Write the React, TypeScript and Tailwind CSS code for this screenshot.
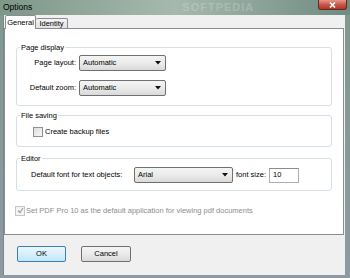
import React from 'react';

const font = { fontFamily: '"Liberation Sans", Arial, sans-serif' };

const Select: React.FC<{ value: string; className?: string }> = ({ value, className = '' }) => (
  <div
    className={`flex items-center justify-between rounded-[2px] border border-[#707070] bg-gradient-to-b from-[#f4f4f4] via-[#ebebeb] to-[#d9d9d9] pl-[3px] pr-[4px] text-[7.5px] text-black ${className}`}
  >
    <span>{value}</span>
    <svg width="6" height="4" viewBox="0 0 6 4">
      <path d="M0 0 H6 L3 3.5 Z" fill="#111" />
    </svg>
  </div>
);

const GroupBox: React.FC<{ title: string; className?: string; children: React.ReactNode }> = ({ title, className = '', children }) => (
  <div className={`relative mx-[11px] rounded-[3px] border border-[#d5dfe5] ${className}`}>
    <span className="absolute -top-[5px] left-[3px] bg-white px-[1px] text-[7.5px] leading-[9px] text-black">{title}</span>
    {children}
  </div>
);

export default function App() {
  return (
    <div style={font} className="flex h-[278px] w-[350px] flex-col bg-gradient-to-b from-[#7f9a8e] to-[#8d9aa2]">
      {/* title bar */}
      <div className="relative flex h-[15px] shrink-0 items-center bg-gradient-to-r from-[#7d9789] via-[#a7b9ae] to-[#6f8b82] pl-[3px]">
        <span className="text-[8.5px] text-black">Options</span>
        <span className="ml-[150px] text-[11px] font-bold tracking-[1px] text-white/20">SOFTPEDIA</span>
        <div className="absolute right-[3px] top-0 flex h-[10px] w-[29px] items-center justify-center rounded-b-[3px] border border-t-0 border-[#6a2a22] bg-gradient-to-b from-[#e3978a] via-[#c9574a] to-[#b13524]">
          <svg width="7" height="6" viewBox="0 0 7 6">
            <path d="M1 0.5 L6 5.5 M6 0.5 L1 5.5" stroke="#fff" strokeWidth="1.6" />
          </svg>
        </div>
      </div>

      {/* client area */}
      <div className="mb-[3px] ml-[3px] mr-[5px] flex flex-1 flex-col border-l border-[#7a8790] bg-[#f0f0f0]">
        {/* tabs */}
        <div className="relative z-10 flex h-[13px] items-end pl-[1px] pt-[2px] text-[7.5px]">
          <div className="-mb-[1px] flex h-[14px] w-[31px] items-start justify-center rounded-t-[2px] border border-b-0 border-[#898c95] bg-white pt-[1px]">
            General
          </div>
          <div className="flex h-[10px] w-[32px] items-center justify-center rounded-t-[2px] border border-b-0 border-l-0 border-[#898c95] bg-gradient-to-b from-[#f4f4f4] to-[#e1e1e1]">
            Identity
          </div>
        </div>

        {/* panel */}
        <div className="mr-[1px] flex h-[207px] flex-col border border-[#898c95] bg-white">
          <GroupBox title="Page display" className="mt-[18px] h-[59px]">
            <div className="flex flex-col gap-[9px] pt-[7px] text-[7.5px]">
              <div className="flex items-center">
                <span className="w-[61px] pr-[2px] text-right">Page layout:</span>
                <Select value="Automatic" className="ml-[1px] h-[16px] w-[87px]" />
              </div>
              <div className="flex items-center">
                <span className="w-[61px] pr-[2px] text-right">Default zoom:</span>
                <Select value="Automatic" className="ml-[1px] h-[16px] w-[87px]" />
              </div>
            </div>
          </GroupBox>

          <GroupBox title="File saving" className="mt-[9px] h-[32px]">
            <div className="flex h-full items-center pl-[16px] pt-[1px] text-[7.5px]">
              <div className="h-[10px] w-[10px] border border-[#8e8f8f] bg-gradient-to-br from-[#dcdcdc] to-[#f8f8f8]" />
              <span className="ml-[2px]">Create backup files</span>
            </div>
          </GroupBox>

          <GroupBox title="Editor" className="mt-[11px] h-[33px]">
            <div className="flex h-full items-center pl-[14px] pt-[1px] text-[7.5px]">
              <span className="w-[103px]">Default font for text objects:</span>
              <Select value="Arial" className="h-[16px] w-[99px]" />
              <span className="ml-[3px]">font size:</span>
              <div className="ml-[3px] flex h-[15px] w-[30px] items-center border border-[#abadb3] border-t-[#8a8d95] bg-white pl-[3px]">
                10
              </div>
            </div>
          </GroupBox>

          <div className="ml-[10px] mt-[14px] flex items-center text-[7.5px] text-[#8d8d8d]">
            <div className="flex h-[10px] w-[10px] items-center justify-center border border-[#c5c5c5] bg-[#f4f4f4]">
              <svg width="7" height="7" viewBox="0 0 7 7">
                <path d="M1 3.5 L3 5.5 L6 1" stroke="#a0a0a0" strokeWidth="1.2" fill="none" />
              </svg>
            </div>
            <span className="ml-[1px]">Set PDF Pro 10 as the default application for viewing pdf documents</span>
          </div>
        </div>

        {/* buttons */}
        <div className="ml-[13px] mt-[11px] flex gap-[15px] text-[7.5px]">
          <button className="flex h-[16px] w-[49px] items-center justify-center rounded-[2px] border border-[#3c7fb1] bg-gradient-to-b from-[#eaf6fd] via-[#d9effc] to-[#bee6fd]">
            OK
          </button>
          <button className="flex h-[16px] w-[50px] items-center justify-center rounded-[2px] border border-[#707070] bg-gradient-to-b from-[#f4f4f4] via-[#ebebeb] to-[#d9d9d9]">
            Cancel
          </button>
        </div>
      </div>
    </div>
  );
}
